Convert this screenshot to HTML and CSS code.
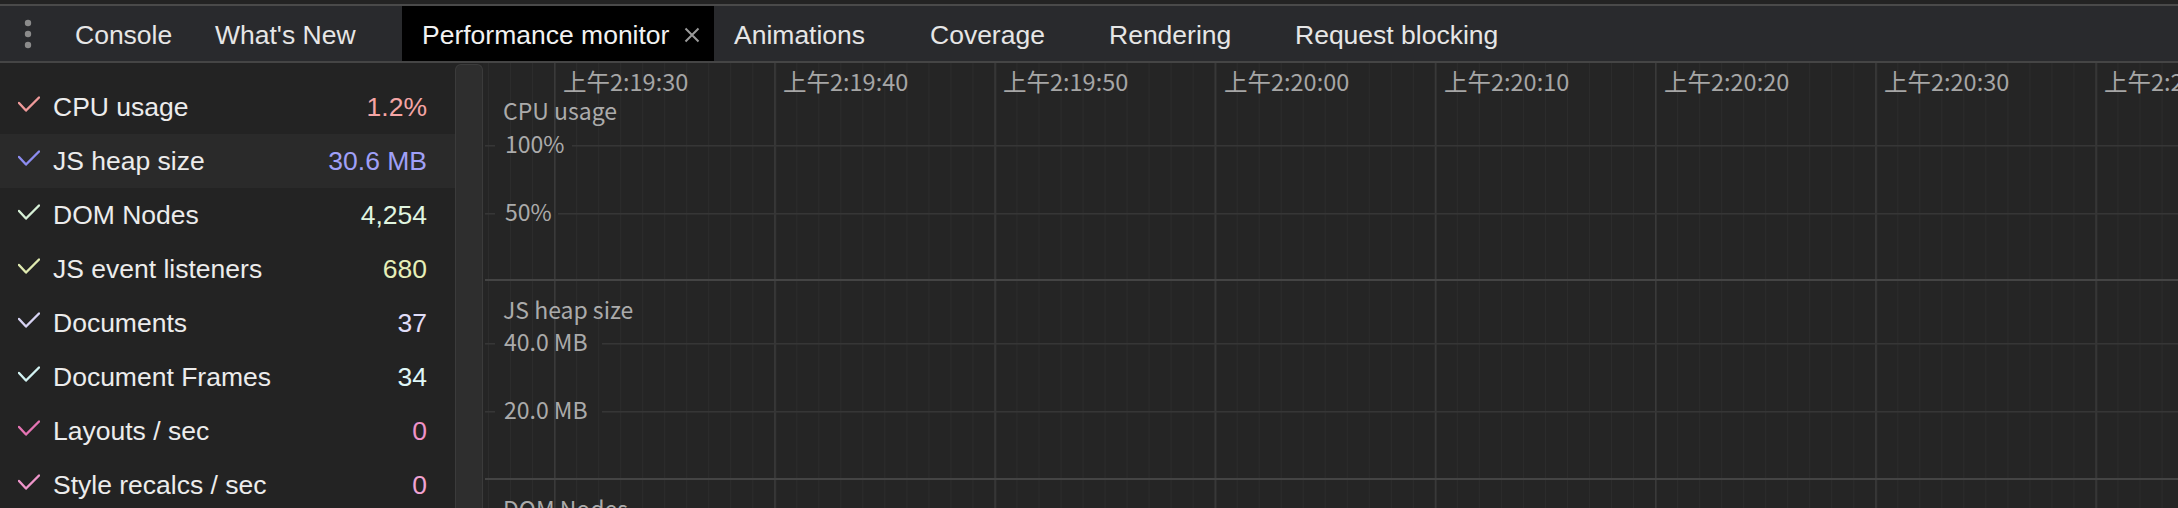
FILE: index.html
```html
<!DOCTYPE html>
<html>
<head>
<meta charset="utf-8">
<link rel="stylesheet" href="styles.css">
</head>
<body>
<div class="topstrip"></div>
<div class="tabbar">
  <div class="menu">
    <svg width="8" height="30" viewBox="0 0 8 30"><circle cx="4" cy="4" r="3.2" fill="#8b8b8b"/><circle cx="4" cy="15" r="3.2" fill="#8b8b8b"/><circle cx="4" cy="26" r="3.2" fill="#8b8b8b"/></svg>
  </div>
  <div class="tab t-console">Console</div>
  <div class="tab t-new">What's New</div>
  <div class="tab t-perf active">Performance monitor<svg class="close" width="16" height="16" viewBox="0 0 16 16"><path d="M1.5 1.5 L14.5 14.5 M14.5 1.5 L1.5 14.5" stroke="#9a9a9a" stroke-width="2" fill="none"/></svg></div>
  <div class="tab t-anim">Animations</div>
  <div class="tab t-cov">Coverage</div>
  <div class="tab t-ren">Rendering</div>
  <div class="tab t-req">Request blocking</div>
</div>
<div class="main">
  <div class="sidebar">
    <div class="row cpu"><svg class="check" width="22" height="16" viewBox="0 0 22 16"><polyline points="1,7 8,14.5 21,1.5"/></svg><span class="label">CPU usage</span><span class="value">1.2%</span></div>
    <div class="row heap hover"><svg class="check" width="22" height="16" viewBox="0 0 22 16"><polyline points="1,7 8,14.5 21,1.5"/></svg><span class="label">JS heap size</span><span class="value">30.6 MB</span></div>
    <div class="row dom"><svg class="check" width="22" height="16" viewBox="0 0 22 16"><polyline points="1,7 8,14.5 21,1.5"/></svg><span class="label">DOM Nodes</span><span class="value">4,254</span></div>
    <div class="row lis"><svg class="check" width="22" height="16" viewBox="0 0 22 16"><polyline points="1,7 8,14.5 21,1.5"/></svg><span class="label">JS event listeners</span><span class="value">680</span></div>
    <div class="row docs"><svg class="check" width="22" height="16" viewBox="0 0 22 16"><polyline points="1,7 8,14.5 21,1.5"/></svg><span class="label">Documents</span><span class="value">37</span></div>
    <div class="row frames"><svg class="check" width="22" height="16" viewBox="0 0 22 16"><polyline points="1,7 8,14.5 21,1.5"/></svg><span class="label">Document Frames</span><span class="value">34</span></div>
    <div class="row lay"><svg class="check" width="22" height="16" viewBox="0 0 22 16"><polyline points="1,7 8,14.5 21,1.5"/></svg><span class="label">Layouts / sec</span><span class="value">0</span></div>
    <div class="row sty"><svg class="check" width="22" height="16" viewBox="0 0 22 16"><polyline points="1,7 8,14.5 21,1.5"/></svg><span class="label">Style recalcs / sec</span><span class="value">0</span></div>
  </div>
  <div class="splitter"></div>
  <div class="chart">
    <svg width="1695" height="445" viewBox="0 0 1695 445">
      <defs>
        <pattern id="minor" patternUnits="userSpaceOnUse" x="5" y="0" width="22.02" height="445">
          <rect x="0" y="0" width="1" height="445" fill="#2c2c2c"/>
        </pattern>
        <pattern id="major" patternUnits="userSpaceOnUse" x="71" y="0" width="220.2" height="445">
          <rect x="0" y="0" width="1.6" height="445" fill="#3a3a3a"/>
        </pattern>
      </defs>
      <rect x="0" y="0" width="1695" height="445" fill="#252525"/>
      <rect x="0" y="0" width="1695" height="445" fill="url(#minor)"/>
      <rect x="60" y="0" width="1635" height="445" fill="url(#major)"/>

      <g class="tl">
        <text x="80" y="28">上午2:19:30</text>
        <text x="300" y="28">上午2:19:40</text>
        <text x="520" y="28">上午2:19:50</text>
        <text x="741" y="28">上午2:20:00</text>
        <text x="961" y="28">上午2:20:10</text>
        <text x="1181" y="28">上午2:20:20</text>
        <text x="1401" y="28">上午2:20:30</text>
        <text x="1621" y="28">上午2:20:40</text>
      </g>

      <g class="hl">
        <rect x="2" y="82" width="10" height="1.6"/><rect x="89" y="82" width="1606" height="1.6"/>
        <rect x="2" y="150" width="10" height="1.6"/><rect x="75" y="150" width="1620" height="1.6"/>
        <rect x="2" y="280" width="10" height="1.6"/><rect x="119" y="280" width="1576" height="1.6"/>
        <rect x="2" y="348" width="10" height="1.6"/><rect x="119" y="348" width="1576" height="1.6"/>
      </g>
      <g class="sep">
        <rect x="2" y="216" width="1693" height="2"/>
        <rect x="2" y="415" width="1693" height="2"/>
      </g>

      <g class="cl">
        <text x="20" y="57">CPU usage</text>
        <text x="22" y="90">100%</text>
        <text x="22" y="158">50%</text>
        <text x="20" y="256">JS heap size</text>
        <text x="21" y="288">40.0 MB</text>
        <text x="21" y="356">20.0 MB</text>
        <text x="20" y="455">DOM Nodes</text>
      </g>
    </svg>
  </div>
</div>
</body>
</html>
```

FILE: styles.css
```css
html, body {
  margin: 0;
  padding: 0;
}
body {
  width: 2178px;
  height: 508px;
  overflow: hidden;
  background: #232323;
  font-family: "Liberation Sans", Arial, sans-serif;
}
.topstrip {
  height: 4px;
  background: #232323;
}
.tabbar {
  height: 55px;
  border-top: 2px solid #4a4a4a;
  border-bottom: 2px solid #454545;
  background: #292a2d;
  display: flex;
  align-items: stretch;
}
.menu {
  width: 54px;
  display: flex;
  align-items: center;
  justify-content: center;
  padding-left: 2px;
  box-sizing: border-box;
}
.tab {
  display: flex;
  align-items: center;
  box-sizing: border-box;
  padding-left: 21px;
  padding-top: 3px;
  font-size: 26.5px;
  color: #e6e6e6;
  white-space: nowrap;
  flex: none;
}
.t-console { width: 140px; }
.t-new { width: 208px; }
.t-perf { width: 312px; padding-left: 20px; background: #000; color: #f2f2f2; }
.t-anim { width: 195px; padding-left: 20px; }
.t-cov { width: 179px; }
.t-ren { width: 186px; }
.t-req { width: 244px; }
.close {
  margin-left: 15px;
  margin-top: -1px;
}
.main {
  display: flex;
  height: 445px;
}
.sidebar {
  width: 455px;
  flex: none;
  background: #232323;
  padding-top: 17px;
  box-sizing: border-box;
}
.row {
  height: 54px;
  display: flex;
  align-items: center;
  padding: 0 28px 0 18px;
  font-size: 26.5px;
  color: #ececec;
}
.row.hover { background: #2a2a2a; }
.check {
  flex: none;
  margin-right: 13px;
  margin-bottom: 7px;
}
.check polyline {
  fill: none;
  stroke-width: 2.4;
  stroke-linecap: round;
  stroke-linejoin: round;
}
.label { flex: 1; white-space: nowrap; }
.value { white-space: nowrap; }

.cpu .check polyline { stroke: #ef9a9a; }
.cpu .value { color: #f5a5a5; }
.heap .check polyline { stroke: #8c8cf0; }
.heap .value { color: #a0a0f8; }
.dom .check polyline { stroke: #d6f0d6; }
.dom .value { color: #e0f5e0; }
.lis .check polyline { stroke: #dfeab0; }
.lis .value { color: #e6efb8; }
.docs .check polyline { stroke: #d6d2f2; }
.docs .value { color: #e0ddf8; }
.frames .check polyline { stroke: #d2f2f2; }
.frames .value { color: #e0f8f8; }
.lay .check polyline { stroke: #e574b3; }
.lay .value { color: #ef92c8; }
.sty .check polyline { stroke: #ee95ca; }
.sty .value { color: #f1a3d3; }

.splitter {
  width: 28px;
  flex: none;
  margin-top: 1px;
  background: #2e2e2e;
  border: 1px solid #3b3b3b;
  border-bottom: none;
  border-radius: 6px 6px 0 0;
  box-sizing: border-box;
}
.chart {
  flex: 1;
  overflow: hidden;
  background: #252525;
}
.chart svg { display: block; }
.tl text {
  font-family: "Noto Sans CJK SC", "Noto Sans", sans-serif;
  font-size: 23.5px;
  fill: #a6a6a6;
}
.cl text {
  font-family: "Noto Sans CJK SC", "Noto Sans", sans-serif;
  font-size: 23px;
  fill: #ababab;
}
.hl rect { fill: #363636; }
.sep rect { fill: #444444; }
```
